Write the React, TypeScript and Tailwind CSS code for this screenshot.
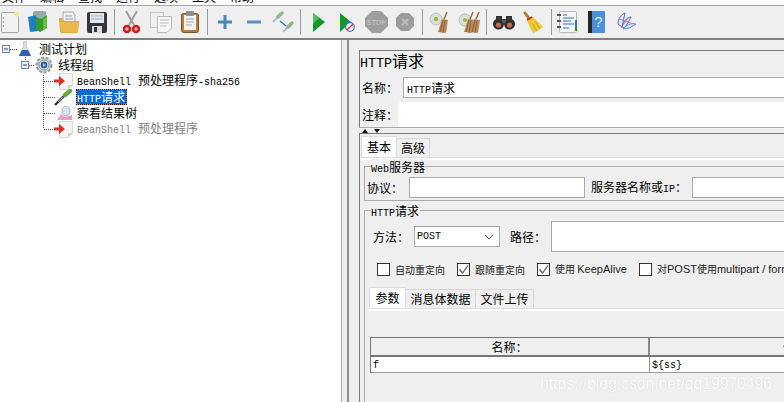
import React from "react";

const sans = "font-['Liberation_Sans','Noto_Sans_CJK_SC',sans-serif]";
const cjk = "font-['Noto_Sans_CJK_SC','Noto_Sans_CJK_SC',sans-serif]";

function M({ children, c = "" }: { children: React.ReactNode; c?: string }) {
  return <span className={`font-['Liberation_Mono',monospace] text-[10px] ${c}`}>{children}</span>;
}

function Sep({ ml }: { ml: string }) {
  return <div className={`${ml} h-[26px] w-px shrink-0 bg-[#9a9a9a]`} />;
}

function Ic({ w, ml, h = 24, children }: { w: number; ml: string; h?: number; children: React.ReactNode }) {
  return (
    <svg width={w} height={h} viewBox={`0 0 ${w} ${h}`} className={`${ml} shrink-0`}>
      {children}
    </svg>
  );
}

function Broom({ dx = 0 }: { dx?: number }) {
  return (
    <g transform={`translate(${dx} 0)`}>
      <path d="M9 22 L13 9 L19 10 L17 23 Z" fill="#b98a58" />
      <path d="M11 22 L14 10 M14 23 L16 10" stroke="#7d5730" strokeWidth="0.8" />
      <path d="M15 9 L18 2" stroke="#9a6b3a" strokeWidth="1.5" />
    </g>
  );
}

function Dropper({ x = 0, y = 0, c = "#5aa64a" }: { x?: number; y?: number; c?: string }) {
  return (
    <g transform={`translate(${x} ${y})`}>
      <path d="M1 11 L7 5" stroke="#bbb" strokeWidth="2" />
      <path d="M6 6 L10 2" stroke={c} strokeWidth="3.5" strokeLinecap="round" />
    </g>
  );
}

function Toolbar() {
  return (
    <div className="flex h-[32px] items-center overflow-hidden">
      <Ic w={18} ml="ml-[1px]">
        <rect x="0.5" y="2.5" width="17" height="20" rx="1" fill="#f2f2f2" stroke="#a5a5a5" />
        <circle cx="2.5" cy="8" r="0.7" fill="#888" />
        <circle cx="2.5" cy="12" r="0.7" fill="#888" />
        <circle cx="2.5" cy="16" r="0.7" fill="#888" />
        <circle cx="16" cy="4" r="2.6" fill="#f7ec8c" />
      </Ic>
      <Ic w={20} ml="ml-[9px]">
        <rect x="5" y="1" width="13" height="12" rx="2" fill="#9aa9a9" />
        <path d="M0 7 L8 5 L10 21 L2 22 Z" fill="#1f7fc0" />
        <path d="M8 7 L13 9 L19 5 L19 18 L12 22 L8 19 Z" fill="#2f9e2a" />
        <path d="M15 9 L19 7 L19 17 L15 20 Z" fill="#64c23f" />
      </Ic>
      <Ic w={22} ml="ml-[10px]">
        <path d="M5 2 H15 L17 5 V13 H5 Z" fill="#f1f1f1" stroke="#aaa" />
        <path d="M7 6 H14 M7 9 H15" stroke="#999" />
        <path d="M1 8 H4 L5 11 H21 L20 21 Q20 23 18 23 H4 Q2 23 2 21 Z" fill="#dba93d" />
        <path d="M2 12 H21 L20 22 H3 Z" fill="#eab94c" />
      </Ic>
      <Ic w={20} ml="ml-[7px]">
        <rect x="0" y="2" width="20" height="21" rx="2" fill="#34383d" />
        <rect x="3" y="3" width="14" height="10" fill="#e6e6e6" />
        <path d="M4 6 H16 M4 9 H16" stroke="#9cb6cf" />
        <rect x="5" y="16" width="10" height="7" fill="#d9d9d9" />
        <rect x="7" y="17" width="3" height="5" fill="#34383d" />
      </Ic>
      <Sep ml="ml-[7px]" />
      <Ic w={17} ml="ml-[8px]">
        <path d="M3 1 L11 15 M14 1 L6 15" stroke="#a0a0a0" strokeWidth="2" />
        <circle cx="4" cy="19" r="3" fill="#e9b0b0" stroke="#cc1f1f" strokeWidth="2.6" />
        <circle cx="13" cy="19" r="3" fill="#e9b0b0" stroke="#cc1f1f" strokeWidth="2.6" />
      </Ic>
      <Ic w={22} ml="ml-[10px]">
        <rect x="0.5" y="2.5" width="13" height="15" fill="#f0f0f0" stroke="#c8c8c8" />
        <path d="M7.5 6.5 H21.5 V18 L17 22.5 H7.5 Z" fill="#f7f7f7" stroke="#bbb" />
        <path d="M10 10 H19 M10 13 H19 M10 16 H17" stroke="#bdbdbd" />
      </Ic>
      <Ic w={18} ml="ml-[9px]">
        <rect x="0.5" y="3.5" width="17" height="19" rx="2" fill="#b7803a" stroke="#7d5520" />
        <rect x="3" y="5" width="12" height="15" fill="#f2f2f2" />
        <rect x="5" y="1" width="8" height="5" rx="1" fill="#8f8f8f" />
        <path d="M5 9 H13 M5 12 H13 M5 15 H11" stroke="#aaa" />
      </Ic>
      <Sep ml="ml-[8px]" />
      <Ic w={14} ml="ml-[10px]">
        <path d="M0 12 H14 M7 5 V19" stroke="#4a86c0" strokeWidth="3" />
      </Ic>
      <Ic w={14} ml="ml-[15px]">
        <path d="M0 12 H14" stroke="#5a90c6" strokeWidth="3" />
      </Ic>
      <Ic w={22} ml="ml-[11px]">
        <Dropper x={0} y={1} c="#8dbb86" />
        <Dropper x={10} y={11} c="#8dbb86" />
        <path d="M8 11 L14 16" stroke="#2a7be0" strokeWidth="1.5" />
      </Ic>
      <Sep ml="ml-[6px]" />
      <Ic w={12} ml="ml-[12px]">
        <path d="M0 3 L12 12 L0 22 Z" fill="#13962c" />
        <path d="M0 3 L6 8 L0 14 Z" fill="#53c15c" />
      </Ic>
      <Ic w={15} ml="ml-[15px]">
        <path d="M0 3 L11 12 L0 22 Z" fill="#13962c" />
        <circle cx="10" cy="17" r="4.3" fill="#fff" stroke="#3a6fd8" strokeWidth="1.2" />
        <path d="M7 20 L13 14" stroke="#d8342c" strokeWidth="1.4" />
      </Ic>
      <Ic w={23} ml="ml-[10px]">
        <path d="M7 1 H16 L23 8 V16 L16 23 H7 L0 16 V8 Z" fill="#9e9e9e" />
        <text x="11.5" y="15" textAnchor="middle" fontSize="7" fontWeight="700" fill="#bdbdbd" fontFamily="Liberation Sans">STOP</text>
      </Ic>
      <Ic w={18} ml="ml-[8px]">
        <path d="M5 3 H13 L18 8 V16 L13 21 H5 L0 16 V8 Z" fill="#9c9c9c" />
        <path d="M6 9 L12 15 M12 9 L6 15" stroke="#bcbcbc" strokeWidth="2.4" />
      </Ic>
      <Sep ml="ml-[8px]" />
      <Ic w={19} ml="ml-[6px]">
        <circle cx="7" cy="9" r="6" fill="#dcdcdc" stroke="#bdbdbd" />
        <circle cx="7" cy="9" r="2.2" fill="#8cc63f" />
        <Broom dx={0} />
      </Ic>
      <Ic w={22} ml="ml-[10px]">
        <circle cx="7" cy="10" r="6" fill="#dcdcdc" stroke="#bdbdbd" />
        <circle cx="7" cy="10" r="2" fill="#8cc63f" />
        <Broom dx={-3} />
        <Broom dx={3} />
      </Ic>
      <Sep ml="ml-[6px]" />
      <Ic w={22} ml="ml-[6px]">
        <circle cx="5.5" cy="14" r="5.5" fill="#2d2d2d" />
        <circle cx="16.5" cy="14" r="5.5" fill="#2d2d2d" />
        <circle cx="5.5" cy="15" r="2.6" fill="#c26a4a" />
        <circle cx="16.5" cy="15" r="2.6" fill="#c26a4a" />
        <rect x="3" y="6" width="6" height="5" fill="#333" />
        <rect x="13" y="6" width="6" height="5" fill="#333" />
        <rect x="9" y="9" width="4" height="4" fill="#555" />
      </Ic>
      <Ic w={21} ml="ml-[7px]">
        <path d="M3 3 L8 10" stroke="#b57a34" strokeWidth="3" strokeLinecap="round" />
        <path d="M5 11 L11 7 L21 17 Q15 22 11 23 Q8 18 5 11 Z" fill="#eccb36" />
        <path d="M5 10 L10 7" stroke="#cf2a20" strokeWidth="2" />
        <path d="M10 13 L15 21 M13 11 L18 19" stroke="#c7a41e" />
      </Ic>
      <Sep ml="ml-[8px]" />
      <Ic w={20} ml="ml-[5px]">
        <rect x="2.5" y="1.5" width="17" height="21" rx="1" fill="#f6f6f6" stroke="#b5b5b5" />
        <path d="M0 5 H4 M0 11 H4 M0 17 H4" stroke="#555" strokeWidth="2" />
        <path d="M6 5 H10 M6 8 H17 M6 11 H14 M6 14 H17 M6 18 H12" stroke="#2a72c9" />
        <rect x="18" y="10" width="2" height="6" fill="#2a72c9" />
        <rect x="18" y="16" width="2" height="5" fill="#2c8f2c" />
      </Ic>
      <Ic w={17} ml="ml-[11px]">
        <rect x="0" y="1" width="17" height="22" rx="1" fill="#4a8fd8" />
        <rect x="0" y="1" width="4" height="22" fill="#22262b" />
        <text x="10.5" y="17" textAnchor="middle" fontSize="15" fill="#dcecff" fontFamily="Liberation Sans">?</text>
      </Ic>
      <Ic w={20} ml="ml-[11px]">
        <path d="M2 14 C2 8 6 4 9 3 C8 8 7 12 6 17 Z" fill="#dfe6f7" stroke="#4a6fd0" />
        <path d="M6 17 C8 10 12 7 15 7 C13 11 11 15 8 18 Z" fill="#dfe6f7" stroke="#4a6fd0" />
        <path d="M8 18 C12 14 16 13 20 14 C16 17 12 19 7 19 Z" fill="#dfe6f7" stroke="#5b7fdc" />
        <path d="M3 9 L15 13 M5 18 L12 8" stroke="#d46a6a" strokeWidth="0.8" />
      </Ic>
    </div>
  );
}

function Flask() {
  return (
    <svg width="12" height="16" viewBox="0 0 12 16" className="shrink-0">
      <path d="M4.5 0 H7.5 V5 L12 15 H0 L4.5 5 Z" fill="#d8dde6" stroke="#aab4c4" strokeWidth="0.5" />
      <path d="M3 9 H9 L12 15 H0 Z" fill="#2d62b8" />
    </svg>
  );
}

function Gear() {
  return (
    <svg width="18" height="18" viewBox="0 0 18 18" className="shrink-0">
      <circle cx="9" cy="9" r="7.5" fill="#cfcfcf" stroke="#9a9a9a" strokeWidth="2" strokeDasharray="3 1.6" />
      <circle cx="9" cy="9" r="5" fill="#f2f2f2" stroke="#8a8a8a" />
      <circle cx="9" cy="9" r="3.4" fill="#2d5f9e" />
      <path d="M8 7 L11 9 L8 11 Z" fill="#a8c8ee" />
    </svg>
  );
}

function Script() {
  return (
    <svg width="19" height="17" viewBox="0 0 19 17" className="shrink-0 overflow-visible">
      <path d="M5.5 0.5 H18.5 V12 L14 16.5 H5.5 Z" fill="#f3f3f3" stroke="#d8d8d8" />
      <path d="M18.5 12 H14 V16.5 Z" fill="#cfcfcf" />
      <path d="M0 6.5 H5 V3 L11 8 L5 13 V9.5 H0 Z" fill="#d8322c" />
    </svg>
  );
}

function Pen() {
  return (
    <svg width="19" height="17" viewBox="0 0 19 17" className="shrink-0">
      <path d="M1 16 L10 7" stroke="#333" strokeWidth="2.4" />
      <path d="M4 13 L9 8" stroke="#aaa" strokeWidth="1" />
      <path d="M11 6 L16 2" stroke="#62a84e" strokeWidth="4.5" strokeLinecap="round" />
    </svg>
  );
}

function Results() {
  return (
    <svg width="19" height="15" viewBox="0 0 19 15" className="shrink-0">
      <path d="M3 14 L7 8 L11 11 L18 9 V14 Z" fill="#ef9bc6" />
      <ellipse cx="12" cy="5" rx="4" ry="5" fill="#d8e4f5" stroke="#9db5d8" />
    </svg>
  );
}

function TreeRow({ pl, icon, gap, children }: { pl: string; icon: React.ReactNode; gap: string; children: React.ReactNode }) {
  return (
    <div className={`flex h-[16px] items-center ${pl}`}>
      <div className="flex h-[16px] items-center">{icon}</div>
      <div className={`${gap} flex items-baseline whitespace-nowrap text-[12px] leading-[16px] text-black`}>{children}</div>
    </div>
  );
}

function Tree() {
  return (
    <div className={`relative h-full w-[342px] shrink-0 border-r border-[#a8a8a8] bg-white pt-[1px] ${cjk}`}>
      <TreeRow pl="pl-[19px]" icon={<Flask />} gap="ml-[8px]">测试计划</TreeRow>
      <TreeRow pl="pl-[35px]" icon={<Gear />} gap="ml-[5px]">线程组</TreeRow>
      <TreeRow pl="pl-[54px]" icon={<Script />} gap="ml-[4px]">
        <M>BeanShell</M>
        <span className="ml-[7px]">预处理程序</span>
        <M>-sha256</M>
      </TreeRow>
      <TreeRow pl="pl-[54px]" icon={<Pen />} gap="ml-[3px]">
        <div className="border border-dotted border-black bg-[#e8923a]">
          <div className="h-[14px] bg-[#0a6bd0] pr-[1px] leading-[14px] text-white">
            <M>HTTP</M>请求
          </div>
        </div>
      </TreeRow>
      <TreeRow pl="pl-[54px]" icon={<Results />} gap="ml-[4px]">察看结果树</TreeRow>
      <TreeRow pl="pl-[54px]" icon={<Script />} gap="ml-[4px]">
        <span className="flex items-baseline text-[#808080]">
          <M>BeanShell</M>
          <span className="ml-[7px]">预处理程序</span>
        </span>
      </TreeRow>
      <svg width="80" height="110" viewBox="0 0 80 110" className="absolute left-0 top-0">
        <g transform="translate(0 -40)">
          <rect x="2.5" y="45.5" width="7" height="7" fill="#e8edf4" stroke="#7a8a9a" />
          <path d="M4 49 H8" stroke="#30507a" />
          <rect x="21.5" y="61.5" width="7" height="7" fill="#e8edf4" stroke="#7a8a9a" />
          <path d="M23 65 H27" stroke="#30507a" />
          <path d="M10 49.5 H18 M25.5 57 V61 M29 65.5 H35 M43.5 75 V129 M44 81.5 H55 M44 97.5 H55 M44 113.5 H56 M44 129.5 H55" stroke="#555" strokeDasharray="1 1" fill="none" />
        </g>
      </svg>
    </div>
  );
}

function Input({ c, children }: { c: string; children?: React.ReactNode }) {
  return <div className={`border border-[#aaa] bg-white ${c}`}>{children}</div>;
}

function Tab({ active, c, children }: { active?: boolean; c: string; children: React.ReactNode }) {
  return (
    <div
      className={
        active
          ? `flex h-[21px] items-center justify-center border border-b-0 border-[#ddd] bg-white text-[12px] ${c}`
          : `mt-[2px] flex h-[19px] items-center justify-center border border-b-0 border-l-0 border-[#d8d8d8] text-[12px] ${c}`
      }
    >
      {children}
    </div>
  );
}

function Check({ on, c, children }: { on?: boolean; c: string; children: React.ReactNode }) {
  return (
    <div className={`flex h-[14px] shrink-0 items-center whitespace-nowrap text-[10px] text-[#222] ${c}`}>
      <div className="h-[13px] w-[13px] shrink-0 border border-[#333] bg-white">
        {on && (
          <svg width="11" height="11" viewBox="0 0 11 11">
            <path d="M1.5 5.5 L4.5 9 L10 1.5" fill="none" stroke="#555" strokeWidth="1.2" />
          </svg>
        )}
      </div>
      <span className="ml-[5px]">{children}</span>
    </div>
  );
}

function Legend({ children }: { children: React.ReactNode }) {
  return (
    <div className="-mt-[8px] ml-[6px] h-[16px] w-fit bg-[#efefef] pr-[1px] text-[12px] leading-[16px] text-black">
      {children}
    </div>
  );
}

function Right() {
  return (
    <div className={`h-full min-w-0 flex-1 overflow-hidden border-l-2 border-[#8f8f8f] pl-[10px] pt-[10px] text-black ${cjk}`}>
      <div className="h-[78px] w-[600px] border-l border-t border-b border-[#7a7a7a] border-b-[#aaa]">
        <div className="h-[20px] text-[16px] leading-[18px]">
          <span className="font-['Liberation_Mono',monospace] text-[13.33px]">HTTP</span>请求
        </div>
        <div className="mt-[6px] flex h-[21px] items-center">
          <div className="ml-[2px] w-[41px] text-[12px]">名称：</div>
          <Input c="h-[21px] flex-1 pl-[3px] text-[12px] leading-[19px]">
            <M>HTTP</M>请求
          </Input>
        </div>
        <div className="mt-[4px] flex h-[25px] items-center">
          <div className="ml-[2px] w-[36px] text-[12px]">注释：</div>
          <div className="h-[25px] flex-1 bg-white" />
        </div>
      </div>
      <div className="flex h-[5px] items-start gap-[6px] pl-[3px] pt-[1px]">
        <svg width="6" height="4" viewBox="0 0 6 4"><path d="M3 0 L6 4 H0 Z" fill="#111" /></svg>
        <svg width="6" height="4" viewBox="0 0 6 4"><path d="M0 0 H6 L3 4 Z" fill="#111" /></svg>
      </div>
      <div className="w-[600px] border-l border-t border-[#7a7a7a] pl-[1px] pt-[2px]">
        <div className="flex">
          <Tab active c="w-[36px]">基本</Tab>
          <Tab c="w-[33px]">高级</Tab>
        </div>
        <div className="h-[3px] border-t border-[#dcdcdc] bg-white" />
        <div className="pl-[3px] pt-[6px]">
          <div className="h-[35px] border-l border-t border-b border-[#aaa]">
            <Legend>
              <M>Web</M>服务器
            </Legend>
            <div className="mt-[2px] flex h-[21px] items-center text-[12px]">
              <div className="ml-[2px] w-[42px]">协议：</div>
              <Input c="h-[21px] w-[176px]" />
              <div className="ml-[6px] w-[101px]">
                服务器名称或<M>IP</M>：
              </div>
              <Input c="h-[21px] flex-1" />
            </div>
          </div>
          <div className="mt-[9px] h-[200px] border-l border-t border-[#aaa]">
            <Legend>
              <M>HTTP</M>请求
            </Legend>
            <div className="mt-[2px] flex h-[31px] items-center text-[12px]">
              <div className="ml-[8px] w-[41px]">方法：</div>
              <div className="flex h-[21px] w-[86px] items-center justify-between border border-[#aaa] bg-white pl-[2px] pr-[5px]">
                <M>POST</M>
                <svg width="10" height="6" viewBox="0 0 10 6"><path d="M1 1 L5 5 L9 1" fill="none" stroke="#555" /></svg>
              </div>
              <div className="ml-[10px] w-[41px]">路径：</div>
              <Input c="h-[31px] flex-1" />
            </div>
            <div className="ml-[12px] mt-[10px] flex h-[14px]">
              <Check c="w-[80px]">自动重定向</Check>
              <Check on c="w-[80px]">跟随重定向</Check>
              <Check on c="w-[102px]">
                使用 <span className={`${sans} text-[11px]`}>KeepAlive</span>
              </Check>
              <Check c="">
                对<span className={`${sans} text-[11px]`}>POST</span>使用<span className={`${sans} text-[11px]`}>multipart / form-data</span>
              </Check>
            </div>
            <div className="ml-[4px] mt-[11px]">
              <div className="flex">
                <Tab active c="w-[37px]">参数</Tab>
                <Tab c="w-[70px]">消息体数据</Tab>
                <Tab c="w-[58px]">文件上传</Tab>
              </div>
              <div className="h-[3px] border-t border-[#dcdcdc] bg-white" />
              <div className="ml-[1px] mt-[26px] border-l border-t border-[#777]">
                <div className="flex h-[19px] border-b-2 border-[#777] text-[12px]">
                  <div className="flex w-[279px] items-center justify-center border-r-2 border-[#8a8a8a]">名称：</div>
                  <div className="flex items-center whitespace-nowrap pl-[133px]">值：</div>
                </div>
                <div className="flex h-[16px] border-b border-[#999] bg-white">
                  <div className="flex w-[279px] items-center border-r border-[#999] pl-[2px] pt-[1px]">
                    <M>f</M>
                  </div>
                  <div className="flex items-center pl-[2px] pt-[1px]">
                    <M>{"${ss}"}</M>
                  </div>
                </div>
              </div>
            </div>
          </div>
        </div>
      </div>
    </div>
  );
}

export default function App() {
  return (
    <div className="relative h-[402px] w-[784px] overflow-hidden bg-[#efefef]">
      <div className={`h-[5px] overflow-hidden bg-white text-[12px] leading-[12px] text-black ${cjk}`}>
        <div className="-mt-[9px] flex gap-[14px] whitespace-nowrap pl-[2px]">
          <span>文件</span>
          <span>编辑</span>
          <span>查找</span>
          <span>运行</span>
          <span>选项</span>
          <span>工具</span>
          <span>帮助</span>
        </div>
      </div>
      <div className="h-px bg-[#aaa]" />
      <Toolbar />
      <div className="h-[2px] bg-[#808080]" />
      <div className="flex h-[362px]">
        <Tree />
        <div className="w-[5px] shrink-0" />
        <Right />
      </div>
      <div className={`absolute left-[540px] top-[374px] whitespace-nowrap text-[15.7px] leading-[20px] text-white opacity-90 [text-shadow:0_0_1px_#c4c4c4] ${sans}`}>
        https://blog.csdn.net/qq19970496
      </div>
    </div>
  );
}
